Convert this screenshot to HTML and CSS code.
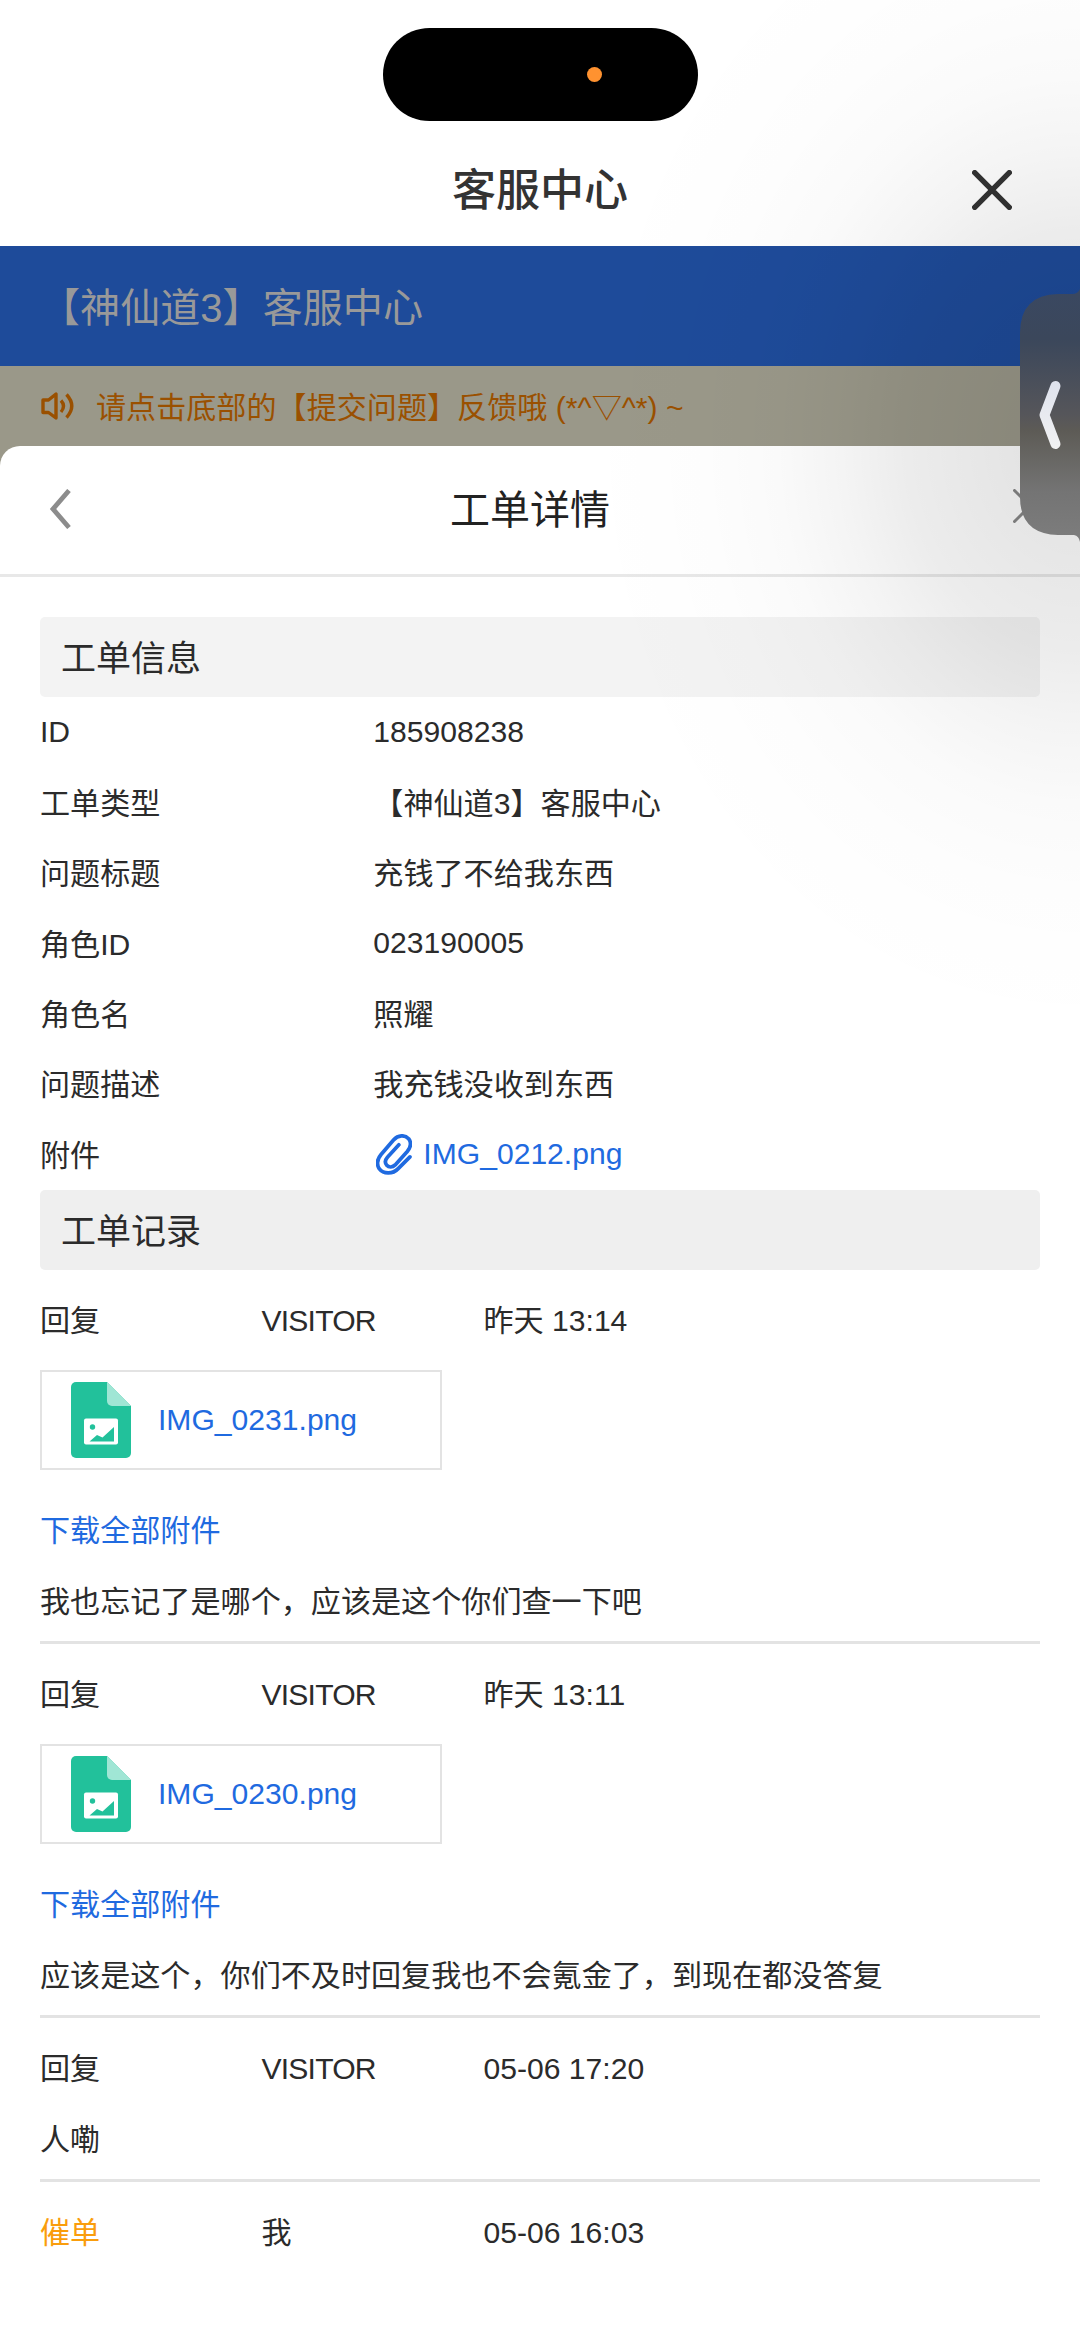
FILE: index.html
```html
<!DOCTYPE html>
<html lang="zh-CN">
<head>
<meta charset="utf-8">
<title>客服中心</title>
<link rel="stylesheet" href="styles.css">
</head>
<body>
<svg class="defs" width="0" height="0" aria-hidden="true">
  <symbol id="file-image" viewBox="0 0 60 76">
    <path fill="#22c19b" d="M5 0h31l24 24v47a5 5 0 0 1-5 5H5a5 5 0 0 1-5-5V5a5 5 0 0 1 5-5z"/>
    <path fill="#a0e6d5" d="M36 0l24 24H41a5 5 0 0 1-5-5z"/>
    <rect x="13" y="36.500" width="34" height="26" rx="2" fill="#fff"/>
    <circle cx="21.500" cy="45" r="2.700" fill="#22c19b"/>
    <path fill="#22c19b" d="M18.500 59.500l7.500-6.500 5.500 2.500L43 45v14.500z"/>
  </symbol>
</svg>

<div class="phone">
  <header class="topbar">
    <div class="island"><span class="island-dot"></span></div>
    <div class="titlebar">
      <h1>客服中心</h1>
      <svg class="titlebar-close" viewBox="0 0 40 40"><path d="M2.700 2.700l34.600 34.600M37.300 2.700L2.700 37.300"/></svg>
    </div>
  </header>

  <div class="banner">【神仙道3】客服中心</div>

  <div class="notice">
    <svg class="speaker" viewBox="0 0 34 28"><path d="M2 8h5.500L15 2v24L7.500 20.500H2zM20 8.500q5 5.500 0 11.500M25.500 2.500q10.500 11.500 0 23"/></svg>
    <span class="notice-text">请点击底部的【提交问题】反馈哦 (*^<span class="glyph">▽</span>^*) ~</span>
  </div>

  <main class="sheet">
    <div class="sheet-head">
      <svg class="sheet-back" viewBox="0 0 22 40"><path d="M20 1.500L4 20l16 18.500"/></svg>
      <h2>工单详情</h2>
      <svg class="sheet-close" viewBox="0 0 34 34"><path d="M1.500 1.500l31 31M32.500 1.500l-31 31"/></svg>
    </div>

    <div class="content">
      <h3 class="section section-light">工单信息</h3>
      <dl class="info">
        <dt class="latin">ID</dt><dd class="latin">185908238</dd>
        <dt>工单类型</dt><dd>【神仙道3】客服中心</dd>
        <dt>问题标题</dt><dd>充钱了不给我东西</dd>
        <dt>角色ID</dt><dd class="latin">023190005</dd>
        <dt>角色名</dt><dd>照耀</dd>
        <dt>问题描述</dt><dd>我充钱没收到东西</dd>
        <dt>附件</dt>
        <dd class="attachment">
          <svg class="clip" viewBox="0 0 107 122"><path d="M101 68L66 103C50 120 22 120 10 104C1 90 4 74 15 61L52 18C66 2 86 2 97 14C106 26 103 40 93 52L57 92C49 100 38 100 32 93C26 86 27 77 34 69L68 32"/></svg>
          <a>IMG_0212.png</a>
        </dd>
      </dl>

      <h3 class="section">工单记录</h3>

      <article class="record">
        <div class="meta"><span>回复</span><span class="caps">VISITOR</span><span>昨天 13:14</span></div>
        <div class="file"><svg><use href="#file-image"/></svg><a>IMG_0231.png</a></div>
        <a class="line">下载全部附件</a>
        <p class="line">我也忘记了是哪个，应该是这个你们查一下吧</p>
      </article>

      <article class="record">
        <div class="meta"><span>回复</span><span class="caps">VISITOR</span><span>昨天 13:11</span></div>
        <div class="file"><svg><use href="#file-image"/></svg><a>IMG_0230.png</a></div>
        <a class="line">下载全部附件</a>
        <p class="line">应该是这个，你们不及时回复我也不会氪金了，到现在都没答复</p>
      </article>

      <article class="record">
        <div class="meta"><span>回复</span><span class="caps">VISITOR</span><span>05-06 17:20</span></div>
        <p class="line">人嘞</p>
      </article>

      <article class="record">
        <div class="meta"><span class="urge">催单</span><span>我</span><span>05-06 16:03</span></div>
      </article>
    </div>
  </main>

  <div class="shade"></div>
  <svg class="drawer" viewBox="0 0 60 260">
    <defs>
      <linearGradient id="drawer-fill" x1="0" y1="0" x2="0" y2="1">
        <stop offset="0" stop-color="#3a4861"/>
        <stop offset=".2" stop-color="#3b475b"/>
        <stop offset=".5" stop-color="#56565a"/>
        <stop offset=".56" stop-color="#5d5b56"/>
        <stop offset=".8" stop-color="#747474"/>
        <stop offset="1" stop-color="#7d7d7d"/>
      </linearGradient>
      <linearGradient id="arrow-fill" gradientUnits="userSpaceOnUse" x1="0" y1="90" x2="0" y2="165">
        <stop offset="0" stop-color="#dde1ed"/>
        <stop offset="1" stop-color="#f2f2f2"/>
      </linearGradient>
    </defs>
    <path fill="url(#drawer-fill)" d="M60 4Q58 9 52 9H38Q0 10 0 48V212Q0 249 38 250H54Q59 251 60 257z"/>
    <path class="drawer-arrow" d="M35.500 101L24.500 130l11 29"/>
  </svg>
</div>
</body>
</html>
```
FILE: styles.css
```css
* {
  box-sizing: border-box;
}

body {
  margin: 0;
  background: #fff;
  color: #2b2b2b;
  font: 30.1px/70.4px "Liberation Sans", "Noto Sans CJK SC", sans-serif;
}

h1, h2, h3, p, dl, dd {
  margin: 0;
  font-weight: 400;
}

svg {
  display: block;
  flex: none;
}

.defs {
  position: absolute;
}

.phone {
  position: relative;
  width: 1080px;
  height: 2341px;
  overflow: hidden;
  background: #9a9889;
}

.topbar {
  height: 246px;
  padding-top: 28px;
  background: #fff;
}

.island {
  display: flex;
  align-items: center;
  width: 315px;
  height: 93px;
  margin: 0 auto;
  padding-left: 204px;
  border-radius: 47px;
  background: #000;
}

.island-dot {
  width: 15px;
  height: 15px;
  border-radius: 50%;
  background: #ff9230;
}

.titlebar {
  display: grid;
  grid-template-columns: 1fr auto 1fr;
  align-items: center;
  height: 125px;
  padding: 12px 68px 0 0;
}

.titlebar h1 {
  grid-column: 2;
  padding: 4px 0 0 68px;
  color: #333;
  font-size: 44px;
  font-weight: 500;
}

.titlebar-close {
  justify-self: end;
  width: 40px;
  height: 40px;
}

.titlebar-close path {
  fill: none;
  stroke: #333;
  stroke-width: 5.400;
  stroke-linecap: round;
}

.banner {
  height: 120px;
  padding: 2px 0 0 40px;
  background: #1e4b9a;
  color: #999;
  font-size: 40.100px;
  line-height: 120px;
}

.notice {
  display: flex;
  align-items: center;
  gap: 21px;
  height: 80px;
  padding-left: 41px;
  color: #9a5000;
}

.notice-text {
  padding-top: 4px;
}

.glyph {
  font-family: "Noto Sans CJK SC", sans-serif;
  line-height: 1;
}

.speaker {
  width: 34px;
  height: 28px;
}

.speaker path {
  fill: none;
  stroke: #9a5000;
  stroke-width: 3.400;
  stroke-linejoin: round;
}

.sheet {
  height: 1895px;
  border-radius: 20px 20px 0 0;
  background: #fff;
}

.sheet-head {
  display: flex;
  align-items: center;
  justify-content: space-between;
  height: 131px;
  padding: 0 33px 3px 49px;
  border-bottom: 3px solid #e8e8e8;
}

.sheet-head h2 {
  margin-right: 24px;
  padding-top: 4px;
  color: #222;
  font-size: 40px;
}

.sheet-back {
  width: 22px;
  height: 40px;
}

.sheet-back path {
  fill: none;
  stroke: #8c8c8c;
  stroke-width: 4.800;
}

.sheet-close {
  width: 34px;
  height: 34px;
  margin-top: -6px;
}

.sheet-close path {
  fill: none;
  stroke: #888;
  stroke-width: 3;
  stroke-linecap: round;
}

.content {
  padding: 40px 40px 0;
}

.section {
  height: 80px;
  padding: 2px 0 0 21px;
  border-radius: 5px;
  background: #efefef;
  font-size: 35px;
  line-height: 80px;
}

.section-light {
  background: #f3f3f3;
}

.info {
  display: grid;
  grid-template-columns: 1fr 2fr;
  grid-auto-rows: 70.400px;
}

.info dt,
.info dd {
  padding-top: 1.500px;
}

.info .latin {
  padding-top: 0;
}

.attachment {
  display: flex;
  align-items: center;
  gap: 11px;
  padding-left: 3px;
}

a {
  color: #1f6ae0;
}

.clip {
  width: 36px;
  height: 41px;
}

.info .attachment {
  padding: 0 0 0 3px;
}

.clip path {
  fill: none;
  stroke: #1f6ae0;
  stroke-width: 11;
  stroke-linecap: round;
  stroke-linejoin: round;
}

.record {
  padding: 16px 0 4px;
  border-bottom: 3px solid #e3e3e3;
}

.record:last-child {
  border-bottom: 0;
}

.meta {
  display: grid;
  grid-template-columns: 221.500px 222px 1fr;
}

.caps {
  letter-spacing: -.8px;
}

.file {
  display: flex;
  align-items: center;
  gap: 27px;
  width: 402px;
  height: 100px;
  margin: 14px 0 26px;
  padding-left: 29px;
  border: 2px solid #e3e3e3;
}

.file svg {
  width: 60px;
  height: 76px;
}

.line {
  display: block;
}

.urge {
  color: #fa9d0c;
}

.shade {
  position: absolute;
  inset: 0;
  background: radial-gradient(ellipse 500px 600px at 1080px 440px, rgba(0, 0, 0, .12) 0, rgba(0, 0, 0, .1) 15%, rgba(0, 0, 0, .073) 35%, rgba(0, 0, 0, .042) 48%, rgba(0, 0, 0, .02) 61%, rgba(0, 0, 0, .008) 76%, rgba(0, 0, 0, 0) 100%);
}

.drawer {
  position: absolute;
  top: 285px;
  right: 0;
  width: 60px;
  height: 260px;
}

.drawer-arrow {
  fill: none;
  stroke: url(#arrow-fill);
  stroke-width: 10;
  stroke-linecap: round;
  stroke-linejoin: round;
}
```
